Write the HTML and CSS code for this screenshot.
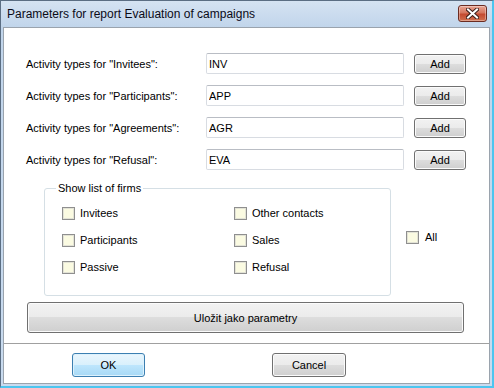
FILE: index.html
```html
<!DOCTYPE html>
<html lang="en">
<head>
	<meta charset="UTF-8">
	<title>Parameters for report Evaluation of campaigns</title>
	<link rel="stylesheet" href="styles.css">
</head>
<body>
	<div class="window">
		<div class="titlebar">
			<span class="title">Parameters for report Evaluation of campaigns</span>
			<span class="close">
				<svg width="13" height="11" viewBox="0 0 13 11">
					<path d="M2 1.5 L11 9.5 M11 1.5 L2 9.5" stroke="#3b1f1a" stroke-width="4" stroke-linecap="square"/>
					<path d="M2 1.5 L11 9.5 M11 1.5 L2 9.5" stroke="#ffffff" stroke-width="2" stroke-linecap="square"/>
				</svg>
			</span>
		</div>
		<div class="client">
			<!-- activity types -->
			<div class="types">
				<label class="lbl">Activity types for "Invitees":</label>
				<input type="text" class="txt" value="INV">
				<button class="btn add">Add</button>

				<label class="lbl">Activity types for "Participants":</label>
				<input type="text" class="txt" value="APP">
				<button class="btn add">Add</button>

				<label class="lbl">Activity types for "Agreements":</label>
				<input type="text" class="txt" value="AGR">
				<button class="btn add">Add</button>

				<label class="lbl">Activity types for "Refusal":</label>
				<input type="text" class="txt" value="EVA">
				<button class="btn add">Add</button>
			</div>

			<!-- firms -->
			<div class="firms">
				<fieldset class="group">
					<legend>Show list of firms</legend>
					<div class="checks">
						<label class="check"><span class="box"></span>Invitees</label>
						<label class="check"><span class="box"></span>Other contacts</label>
						<label class="check"><span class="box"></span>Participants</label>
						<label class="check"><span class="box"></span>Sales</label>
						<label class="check"><span class="box"></span>Passive</label>
						<label class="check"><span class="box"></span>Refusal</label>
					</div>
				</fieldset>
				<label class="check all"><span class="box"></span>All</label>
			</div>

			<button class="btn wide">Uložit jako parametry</button>

			<div class="footer">
				<button class="btn ok">OK</button>
				<button class="btn cancel">Cancel</button>
			</div>
		</div>
	</div>
</body>
</html>
```

FILE: styles.css
```css
body{
	margin: 0;
	font-family: "Liberation Sans", Arial, sans-serif;
	font-size: 11px;
	color: #000;
	background: #fff;
}
.window{
	width: 494px;
	height: 388px;
	box-sizing: border-box;
	display: flex;
	flex-direction: column;
	background: linear-gradient(#d5e3f2, #c1d5eb 26px, #c9dbef);
	border: 1px solid #5b6e83;
	border-right: 2px solid #4cc5ef;
	border-bottom: 2px solid #4cc5ef;
}
.titlebar{
	height: 26px;
	display: flex;
	align-items: flex-start;
	justify-content: space-between;
}
.title{
	font-size: 12px;
	margin: 6px 0 0 6px;
	color: #0b0b18;
}
.close{
	width: 29px;
	height: 17px;
	box-sizing: border-box;
	margin: 4px 5px 0 0;
	border: 1px solid #6b2c22;
	border-radius: 3px;
	background: linear-gradient(#e8a493, #d5775f 45%, #c44a30 55%, #d0704f);
	box-shadow: inset 0 0 0 1px rgba(255,255,255,0.35);
	display: flex;
	align-items: center;
	justify-content: center;
}
.client{
	flex: 1;
	margin: 0 2px 2px 2px;
	border: 1px solid #9aa3ad;
	background: #fff;
	display: flex;
	flex-direction: column;
}
.types{
	display: grid;
	grid-template-columns: 170px 198px 52px;
	grid-auto-rows: 21px;
	column-gap: 10px;
	row-gap: 11px;
	padding: 25px 0 0 22px;
	align-items: center;
}
.txt{
	height: 21px;
	box-sizing: border-box;
	border: 1px solid #d8dce2;
	border-top-color: #b9bdc4;
	border-radius: 2px;
	padding: 0 2px;
	font: inherit;
	color: #000;
	outline: none;
}
.btn{
	font: inherit;
	font-weight: normal;
	color: #000;
	padding: 0;
	border: 1px solid #707070;
	border-radius: 3px;
	background: linear-gradient(#f2f2f2, #ebebeb 50%, #dddddd 50%, #cfcfcf);
	box-shadow: inset 0 0 0 1px #fbfbfb;
}
.add{
	height: 20px;
}
.firms{
	display: flex;
	align-items: center;
}
.group{
	margin: 12px 0 0 40px;
	width: 347px;
	box-sizing: border-box;
	padding: 12px 0 21px 17px;
	border: 1px solid #d5dfe5;
	border-radius: 3px;
}
.group legend{
	padding: 0 2px;
	margin-left: -6px;
	line-height: 13px;
}
.checks{
	display: grid;
	grid-template-columns: 172px auto;
	row-gap: 14px;
}
.check{
	display: flex;
	align-items: center;
	gap: 5px;
	line-height: 13px;
	height: 13px;
}
.box{
	width: 13px;
	height: 13px;
	box-sizing: border-box;
	border: 1px solid #8f8f8f;
	background: #fbfbe2;
	box-shadow: inset 0 0 0 1px #e3e3d6;
}
.all{
	margin: 8px 0 0 15px;
	gap: 6px;
}
.wide{
	margin: 6px 0 0 23px;
	width: 437px;
	height: 31px;
}
.footer{
	margin-top: 10px;
	border-top: 1px solid #a0a0a0;
	padding-top: 9px;
	display: flex;
}
.ok{
	margin-left: 68px;
	width: 73px;
	height: 24px;
	border-color: #3c7fb1;
	background: linear-gradient(#eaf6fd, #d9f0fc 50%, #bee6fd 50%, #a7d9f5);
	box-shadow: inset 0 0 0 1px #ddf2fd;
}
.cancel{
	margin-left: 127px;
	width: 74px;
	height: 24px;
}
```
